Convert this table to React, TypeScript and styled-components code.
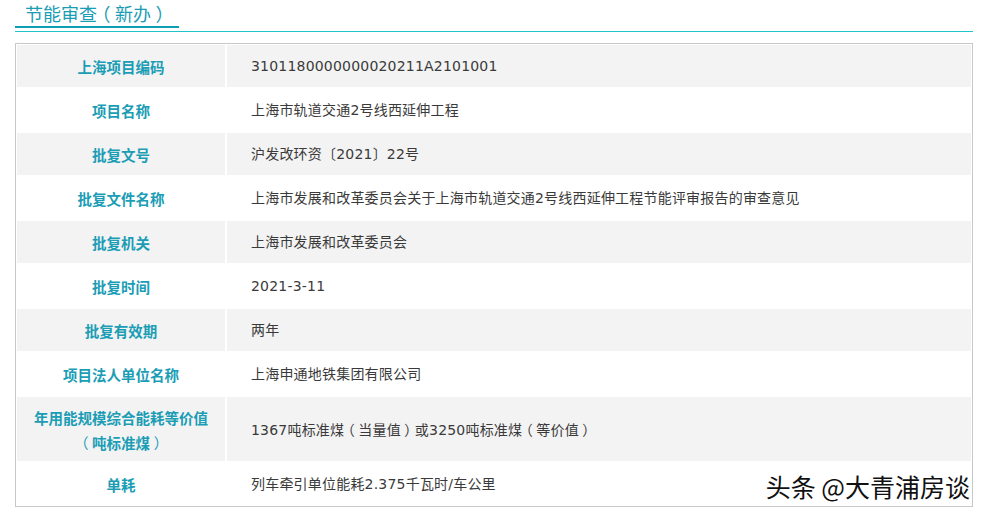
import * as React from "react";
import styled, { createGlobalStyle } from "styled-components";

type Row = {
  label: string;
  value: string;
  tall?: boolean;
};

const rows: Row[] = [
  { label: "上海项目编码", value: "3101180000000020211A2101001" },
  { label: "项目名称", value: "上海市轨道交通2号线西延伸工程" },
  { label: "批复文号", value: "沪发改环资〔2021〕22号" },
  {
    label: "批复文件名称",
    value: "上海市发展和改革委员会关于上海市轨道交通2号线西延伸工程节能评审报告的审查意见",
  },
  { label: "批复机关", value: "上海市发展和改革委员会" },
  { label: "批复时间", value: "2021-3-11" },
  { label: "批复有效期", value: "两年" },
  { label: "项目法人单位名称", value: "上海申通地铁集团有限公司" },
  {
    label: "年用能规模综合能耗等价值\n（吨标准煤）",
    value: "1367吨标准煤（当量值）或3250吨标准煤（等价值）",
    tall: true,
  },
  { label: "单耗", value: "列车牵引单位能耗2.375千瓦时/车公里" },
];

// full-width brackets sit centred in their box in the original
function withParens(text: string) {
  return text.split("\n").map((line, li) => (
    <React.Fragment key={li}>
      {li > 0 && <br />}
      {line.split(/([（）])/).map((part, i) =>
        part === "（" || part === "）" ? <Paren key={i}>{part}</Paren> : part
      )}
    </React.Fragment>
  ));
}

function App() {
  return (
    <>
      <GlobalStyle />
      <Page>
        <Heading>
          <HeadingText>{withParens("节能审查（新办）")}</HeadingText>
        </Heading>
        <Table>
          {rows.map((row, i) => (
            <React.Fragment key={i}>
              <LabelCell $shaded={i % 2 === 0} $tall={row.tall}>
                <div>{withParens(row.label)}</div>
              </LabelCell>
              <ValueCell $shaded={i % 2 === 0} $tall={row.tall}>
                <span>{withParens(row.value)}</span>
              </ValueCell>
            </React.Fragment>
          ))}
        </Table>
        <Watermark>头条 @大青浦房谈</Watermark>
      </Page>
    </>
  );
}

export default App;

const GlobalStyle = createGlobalStyle`
  html, body {
    margin: 0;
    padding: 0;
    background: #ffffff;
  }
  body {
    font-family: "DejaVu Sans", "Noto Sans CJK SC", sans-serif;
  }
  *, *::before, *::after {
    box-sizing: border-box;
  }
`;

const Page = styled.div`
  position: relative;
  width: 973px;
  padding-left: 15px;
  height: 517px;
`;

const Paren = styled.span`
  display: inline-block;
  width: 1em;
  text-align: center;
  text-indent: 0;
  font-family: "Noto Sans CJK SC", sans-serif;
  font-weight: 400;
  font-feature-settings: "halt" 1;
`;

const Heading = styled.div`
  height: 32px;
  border-bottom: 1px solid #1ec5c8;
  margin-bottom: 11px;
  display: flex;
  align-items: flex-start;
`;

const HeadingText = styled.div`
  width: 164px;
  height: 28px;
  padding-left: 10px;
  border-bottom: 2px solid #0a9fb2;
  font-family: "Noto Sans CJK SC", sans-serif;
  font-size: 18px;
  line-height: 26px;
  color: #1a9cb4;
  white-space: nowrap;
`;

const Table = styled.div`
  display: grid;
  grid-template-columns: 208px 1fr;
  gap: 2px;
  padding: 1px;
  border: 1px solid #c8c8c8;
  width: 958px;
`;

const Cell = styled.div<{ $shaded: boolean; $tall?: boolean }>`
  height: ${(p) => (p.$tall ? 64 : 42)}px;
  background: ${(p) => (p.$shaded ? "#f3f3f3" : "#ffffff")};
  display: flex;
  align-items: center;
  font-size: 14px;
`;

const LabelCell = styled(Cell)`
  justify-content: center;
  text-align: center;
  font-family: "Noto Sans CJK SC", sans-serif;
  font-size: 14.5px;
  font-weight: 700;
  color: #1a9db5;
  line-height: 25px;
  padding-top: 1px;
`;

const ValueCell = styled(Cell)`
  padding-left: 24px;
  color: #3a3a3a;
  white-space: nowrap;
  letter-spacing: 0.2px;
  line-height: 22px;
`;

const Watermark = styled.div`
  position: absolute;
  right: 3px;
  top: 470px;
  font-family: "Noto Sans CJK SC", sans-serif;
  font-size: 25px;
  line-height: 32px;
  color: #111;
  text-shadow: 1px 1px 0 #fff, -1px -1px 0 #fff, 1px -1px 0 #fff,
    -1px 1px 0 #fff, 0 0 2px #fff;
`;
